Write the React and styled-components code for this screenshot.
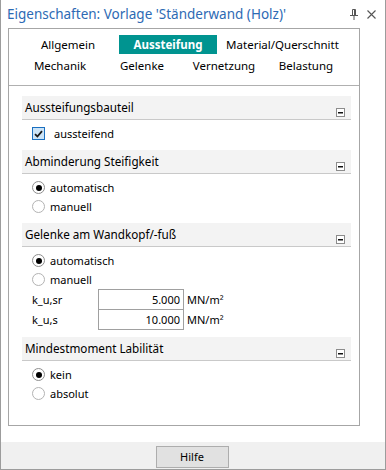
import React from 'react';
import styled, { createGlobalStyle } from 'styled-components';

const GlobalStyle = createGlobalStyle`
  html, body {
    margin: 0;
    padding: 0;
    background: #ffffff;
  }
  * {
    box-sizing: border-box;
  }
`;

const Window = styled.div`
  width: 386px;
  height: 470px;
  display: flex;
  flex-direction: column;
  background: #ffffff;
  border: 1px solid #9c9c9c;
  border-top: none;
  font-family: "Noto Sans", "Open Sans", sans-serif;
  color: #000000;
`;

const TitleBar = styled.div`
  height: 28px;
  display: flex;
  align-items: center;
  padding: 0 9px 0 6px;
`;

const Title = styled.div`
  flex: 1;
  font-size: 13.5px;
  color: #2d6ab4;
  white-space: nowrap;
  padding-bottom: 1px;
`;

const TitleButtons = styled.div`
  display: flex;
  align-items: center;
  gap: 9px;
`;

const Panel = styled.div`
  margin: 0 25px 16px 7px;
  height: 398px;
  border: 1px solid #a6a6a6;
  display: flex;
  flex-direction: column;
`;

const TabArea = styled.div`
  padding: 6px 0 10px;
  border-bottom: 1px solid #b0b0b0;
  display: flex;
  flex-direction: column;
  gap: 2px;
`;

const TabRow = styled.div`
  display: flex;
  padding-left: ${p => p.$indent}px;
`;

const Tab = styled.div`
  width: ${p => p.$w}px;
  height: 19px;
  line-height: 19px;
  text-align: center;
  font-size: 11.5px;
  white-space: nowrap;
  background: ${p => (p.$active ? '#009490' : 'transparent')};
  color: ${p => (p.$active ? '#ffffff' : '#000000')};
  font-weight: ${p => (p.$active ? 700 : 400)};
`;

const Content = styled.div`
  padding: 10px 8px 0 13px;
`;

const Section = styled.div`
  padding-bottom: 7px;
`;

const SectionHeader = styled.div`
  height: 24px;
  background: #f3f3f3;
  border-bottom: 1px solid #c9c9c9;
  display: flex;
  justify-content: space-between;
  padding: 0 6px 0 3px;
`;

const HeaderText = styled.div`
  font-size: 11.7px;
  line-height: 23px;
  white-space: nowrap;
`;

const Collapse = styled.svg`
  align-self: flex-end;
  margin-bottom: 2px;
  flex-shrink: 0;
`;

const SectionBody = styled.div`
  padding: 4px 0 0 10px;
`;

const OptionRow = styled.div`
  height: 19px;
  display: flex;
  align-items: center;
  font-size: 11px;
  gap: ${p => p.$gap}px;
  white-space: nowrap;
`;

const RadioCircle = styled.div`
  width: 13px;
  height: 13px;
  border-radius: 50%;
  border: 1px solid ${p => (p.$on ? '#8e8e8e' : '#b3b3b3')};
  background: #ffffff;
  display: flex;
  align-items: center;
  justify-content: center;
  flex-shrink: 0;
`;

const RadioDot = styled.div`
  width: 6px;
  height: 6px;
  border-radius: 50%;
  background: #000000;
`;

const CheckBox = styled.div`
  width: 13px;
  height: 13px;
  border: 1px solid #1a6fc0;
  background: #cce4f7;
  display: flex;
  align-items: center;
  justify-content: center;
  flex-shrink: 0;
`;

const FieldRow = styled.div`
  display: flex;
  align-items: center;
  font-size: 11px;
  & + & {
    margin-top: -1px;
  }
`;

const FieldLabel = styled.div`
  width: 66px;
  white-space: nowrap;
`;

const FieldInput = styled.div`
  width: 86px;
  height: 21px;
  border: 1px solid #a0a0a0;
  text-align: right;
  padding-right: 3px;
  line-height: 19px;
  font-size: 11px;
`;

const Unit = styled.div`
  padding-left: 3px;
  white-space: nowrap;
`;

const Spacer = styled.div`
  flex: 1;
`;

const Footer = styled.div`
  flex: 1;
  background: #f0f0f0;
  display: flex;
  justify-content: center;
  padding-top: 4px;
`;

const Button = styled.div`
  width: 73px;
  height: 22px;
  margin-left: -2px;
  border: 1px solid #adadad;
  background: #e1e1e1;
  font-size: 11px;
  line-height: 20px;
  text-align: center;
`;

const MinusIcon = () => (
  <Collapse width="9" height="9" viewBox="0 0 9 9">
    <rect x="0.5" y="0.5" width="8" height="8" fill="#ffffff" stroke="#8c8c8c" />
    <rect x="2" y="4" width="5" height="1.5" fill="#111111" />
  </Collapse>
);

const Header = ({ children }) => (
  <SectionHeader>
    <HeaderText>{children}</HeaderText>
    <MinusIcon />
  </SectionHeader>
);

const Radio = ({ on, children }) => (
  <OptionRow $gap={5}>
    <RadioCircle $on={on}>{on && <RadioDot />}</RadioCircle>
    {children}
  </OptionRow>
);

const Check = ({ children }) => (
  <OptionRow $gap={9}>
    <CheckBox>
      <svg width="9" height="8" viewBox="0 0 9 8">
        <path d="M1 4.2 L3.4 6.5 L8 1.2" fill="none" stroke="#1a1a1a" strokeWidth="1.8" />
      </svg>
    </CheckBox>
    {children}
  </OptionRow>
);

const Field = ({ label, value }) => (
  <FieldRow>
    <FieldLabel>{label}</FieldLabel>
    <FieldInput>{value}</FieldInput>
    <Unit>MN/m²</Unit>
  </FieldRow>
);

const App = () => {
  return (
    <>
      <GlobalStyle />
      <Window>
        <TitleBar>
          <Title>Eigenschaften: Vorlage 'Ständerwand (Holz)'</Title>
          <TitleButtons>
            <svg width="8" height="11" viewBox="0 0 8 11">
              <path d="M2.5 0.5 H5.5 V6.5 M2.5 0.5 V6.5" fill="none" stroke="#555555" />
              <path d="M0 6.5 H8" stroke="#555555" />
              <path d="M4 6.5 V11" stroke="#555555" />
              <path d="M4.5 1 V6" stroke="#555555" />
            </svg>
            <svg width="9" height="9" viewBox="0 0 9 9">
              <path d="M0.5 0.5 L8.5 8.5 M8.5 0.5 L0.5 8.5" stroke="#555555" strokeWidth="1.1" />
            </svg>
          </TitleButtons>
        </TitleBar>

        <Panel>
          <TabArea>
            <TabRow $indent={8}>
              <Tab $w={102}>Allgemein</Tab>
              <Tab $w={98} $active>Aussteifung</Tab>
              <Tab $w={131}>Material/Querschnitt</Tab>
            </TabRow>
            <TabRow $indent={10}>
              <Tab $w={82}>Mechanik</Tab>
              <Tab $w={82}>Gelenke</Tab>
              <Tab $w={82}>Vernetzung</Tab>
              <Tab $w={82}>Belastung</Tab>
            </TabRow>
          </TabArea>

          <Content>
            <Section>
              <Header>Aussteifungsbauteil</Header>
              <SectionBody>
                <Check>aussteifend</Check>
              </SectionBody>
            </Section>

            <Section>
              <Header>Abminderung Steifigkeit</Header>
              <SectionBody>
                <Radio on>automatisch</Radio>
                <Radio>manuell</Radio>
              </SectionBody>
            </Section>

            <Section>
              <Header>Gelenke am Wandkopf/-fuß</Header>
              <SectionBody>
                <Radio on>automatisch</Radio>
                <Radio>manuell</Radio>
                <Field label="k_u,sr" value="5.000" />
                <Field label="k_u,s" value="10.000" />
              </SectionBody>
            </Section>

            <Section>
              <Header>Mindestmoment Labilität</Header>
              <SectionBody>
                <Radio on>kein</Radio>
                <Radio>absolut</Radio>
              </SectionBody>
            </Section>
          </Content>
          <Spacer />
        </Panel>

        <Footer>
          <Button>Hilfe</Button>
        </Footer>
      </Window>
    </>
  );
};

export default App;
